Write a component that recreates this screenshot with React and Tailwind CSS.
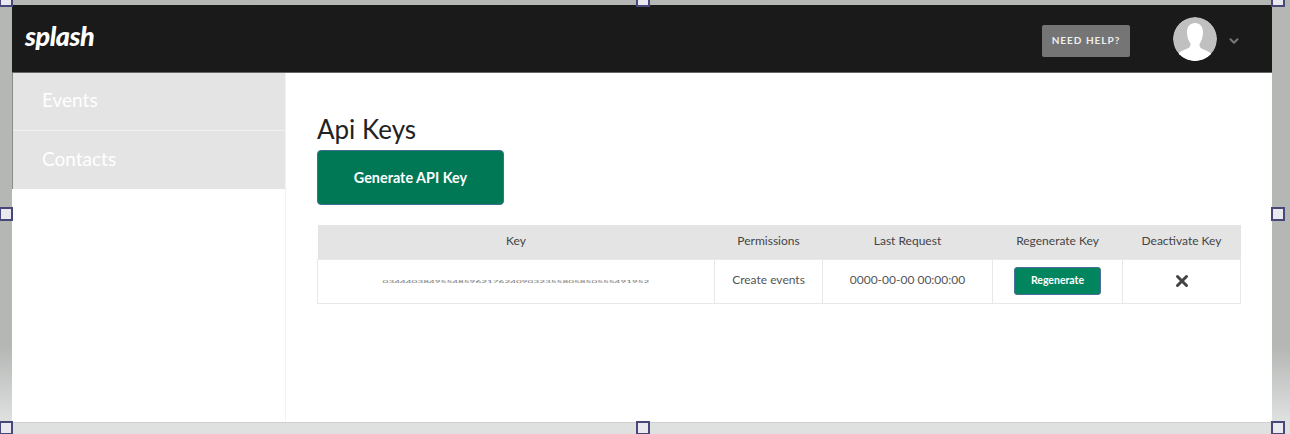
import React from 'react';
import { ChevronDown, X } from 'lucide-react';

const lato = { fontFamily: 'Lato, "Open Sans", sans-serif' };

const handles = [
  'left-[-1px] top-[-7px]', 'left-[636px] top-[-7px]', 'left-[1271px] top-[-7px]',
  'left-[-1px] top-[207px]', 'left-[1271px] top-[207px]',
  'left-[-1px] top-[421px]', 'left-[636px] top-[421px]', 'left-[1271px] top-[421px]',
];

function Avatar() {
  return (
    <svg viewBox="0 0 44 44" className="w-[44px] h-[44px] rounded-full">
      <circle cx="22" cy="22" r="22" fill="#c0c0c0" />
      <path d="M22 6c-5 0-8 3.500-8 9 0 5 1.500 9 3.500 11.500 0 2.500-.5 4-3 5-3 1.200-7.500 3-9.500 5.500C9 42 15 44 22 44s13-2 17-6.500c-2-2.500-6.500-4.300-9.500-5.500-2.500-1-3-2.500-3-5C28.500 24 30 20 30 15c0-5.500-3-9-8-9z" fill="#fff" />
    </svg>
  );
}

export default function App() {
  return (
    <div className="relative w-[1290px] h-[434px] overflow-hidden bg-gradient-to-b from-[#b5b7b5] from-80% to-[#dfe1e0] to-97% pt-[5px] pl-[12px]" style={lato}>
      <div className="w-[1260px] h-[418px] bg-white border-b border-[#d0d0d0] flex flex-col">
        {/* Navbar */}
        <nav className="h-[68px] shrink-0 bg-[#1a1a1a] border-b border-[#666] flex items-center">
          <span className="ml-[13px] mt-[-5px] text-[27px] font-black italic text-white tracking-[-0.5px]">splash</span>
          <button className="ml-auto mt-[4px] w-[88px] h-[32px] bg-[#757575] rounded-[2px] text-[10px] font-bold text-[#eee] tracking-[1px]">NEED HELP?</button>
          <div className="ml-[43px] mt-[1px]"><Avatar /></div>
          <ChevronDown className="ml-[10px] mr-[31px] mt-[4px] w-[14px] h-[14px] text-[#777]" strokeWidth={3.5} />
        </nav>

        <div className="flex flex-1">
          {/* Sidebar */}
          <aside className="w-[274px] shrink-0 border-r border-[#f3f3f3]">
            <div className="border-l border-[#8a8a8a]">
              <div className="h-[58px] bg-[#e4e4e4] border-b border-[#f0f0f0] pl-[29px] pt-[13px] text-[19px] leading-[27px] text-white">Events</div>
              <div className="h-[58px] bg-[#e4e4e4] pl-[29px] pt-[14px] text-[19px] leading-[27px] text-white">Contacts</div>
            </div>
          </aside>

          {/* Main */}
          <main className="flex-1 pl-[31px] pr-[31px] pt-[38px]">
            <h1 className="text-[26px] leading-[36px] mb-[3px] text-[#222]">Api Keys</h1>
            <button className="w-[187px] h-[55px] bg-[#007856] border border-[#3f6f8f] rounded-[4px] text-[14.4px] font-bold text-white">Generate API Key</button>
            <table className="mt-[20px] w-[924px] table-fixed border-collapse text-[12px] text-[#444]">
              <thead>
                <tr className="h-[34px] bg-[#e4e4e4]">
                  <th className="w-[397px] font-normal pb-[2px]">Key</th>
                  <th className="w-[108px] font-normal pb-[2px]">Permissions</th>
                  <th className="w-[170px] font-normal pb-[2px]">Last Request</th>
                  <th className="w-[130px] font-normal pb-[2px]">Regenerate Key</th>
                  <th className="font-normal pb-[2px]">Deactivate Key</th>
                </tr>
              </thead>
              <tbody>
                <tr className="h-[44px] text-center text-[#555]">
                  <td className="border border-[#e8e8e8]">
                    <span className="inline-block scale-y-[0.4] text-[10px] text-[#777]">0344403849554859621762409032355805850555491952</span>
                  </td>
                  <td className="border border-[#e8e8e8] pb-[2px]">Create events</td>
                  <td className="border border-[#e8e8e8] pb-[2px]">0000-00-00 00:00:00</td>
                  <td className="border border-[#e8e8e8]">
                    <button className="w-[87px] h-[28px] bg-[#00855f] border border-[#4d6f9f] rounded-[3px] text-[10.5px] font-bold text-white">Regenerate</button>
                  </td>
                  <td className="border border-[#e8e8e8]">
                    <X className="mx-auto w-[18px] h-[18px] text-[#444]" strokeWidth={4} />
                  </td>
                </tr>
              </tbody>
            </table>
          </main>
        </div>
      </div>

      {/* resize handles */}
      {handles.map(h => (
        <div key={h} className={`absolute ${h} w-[14px] h-[14px] bg-[#e9e9ef] border-2 border-[#47477a]`} />
      ))}
    </div>
  );
}
